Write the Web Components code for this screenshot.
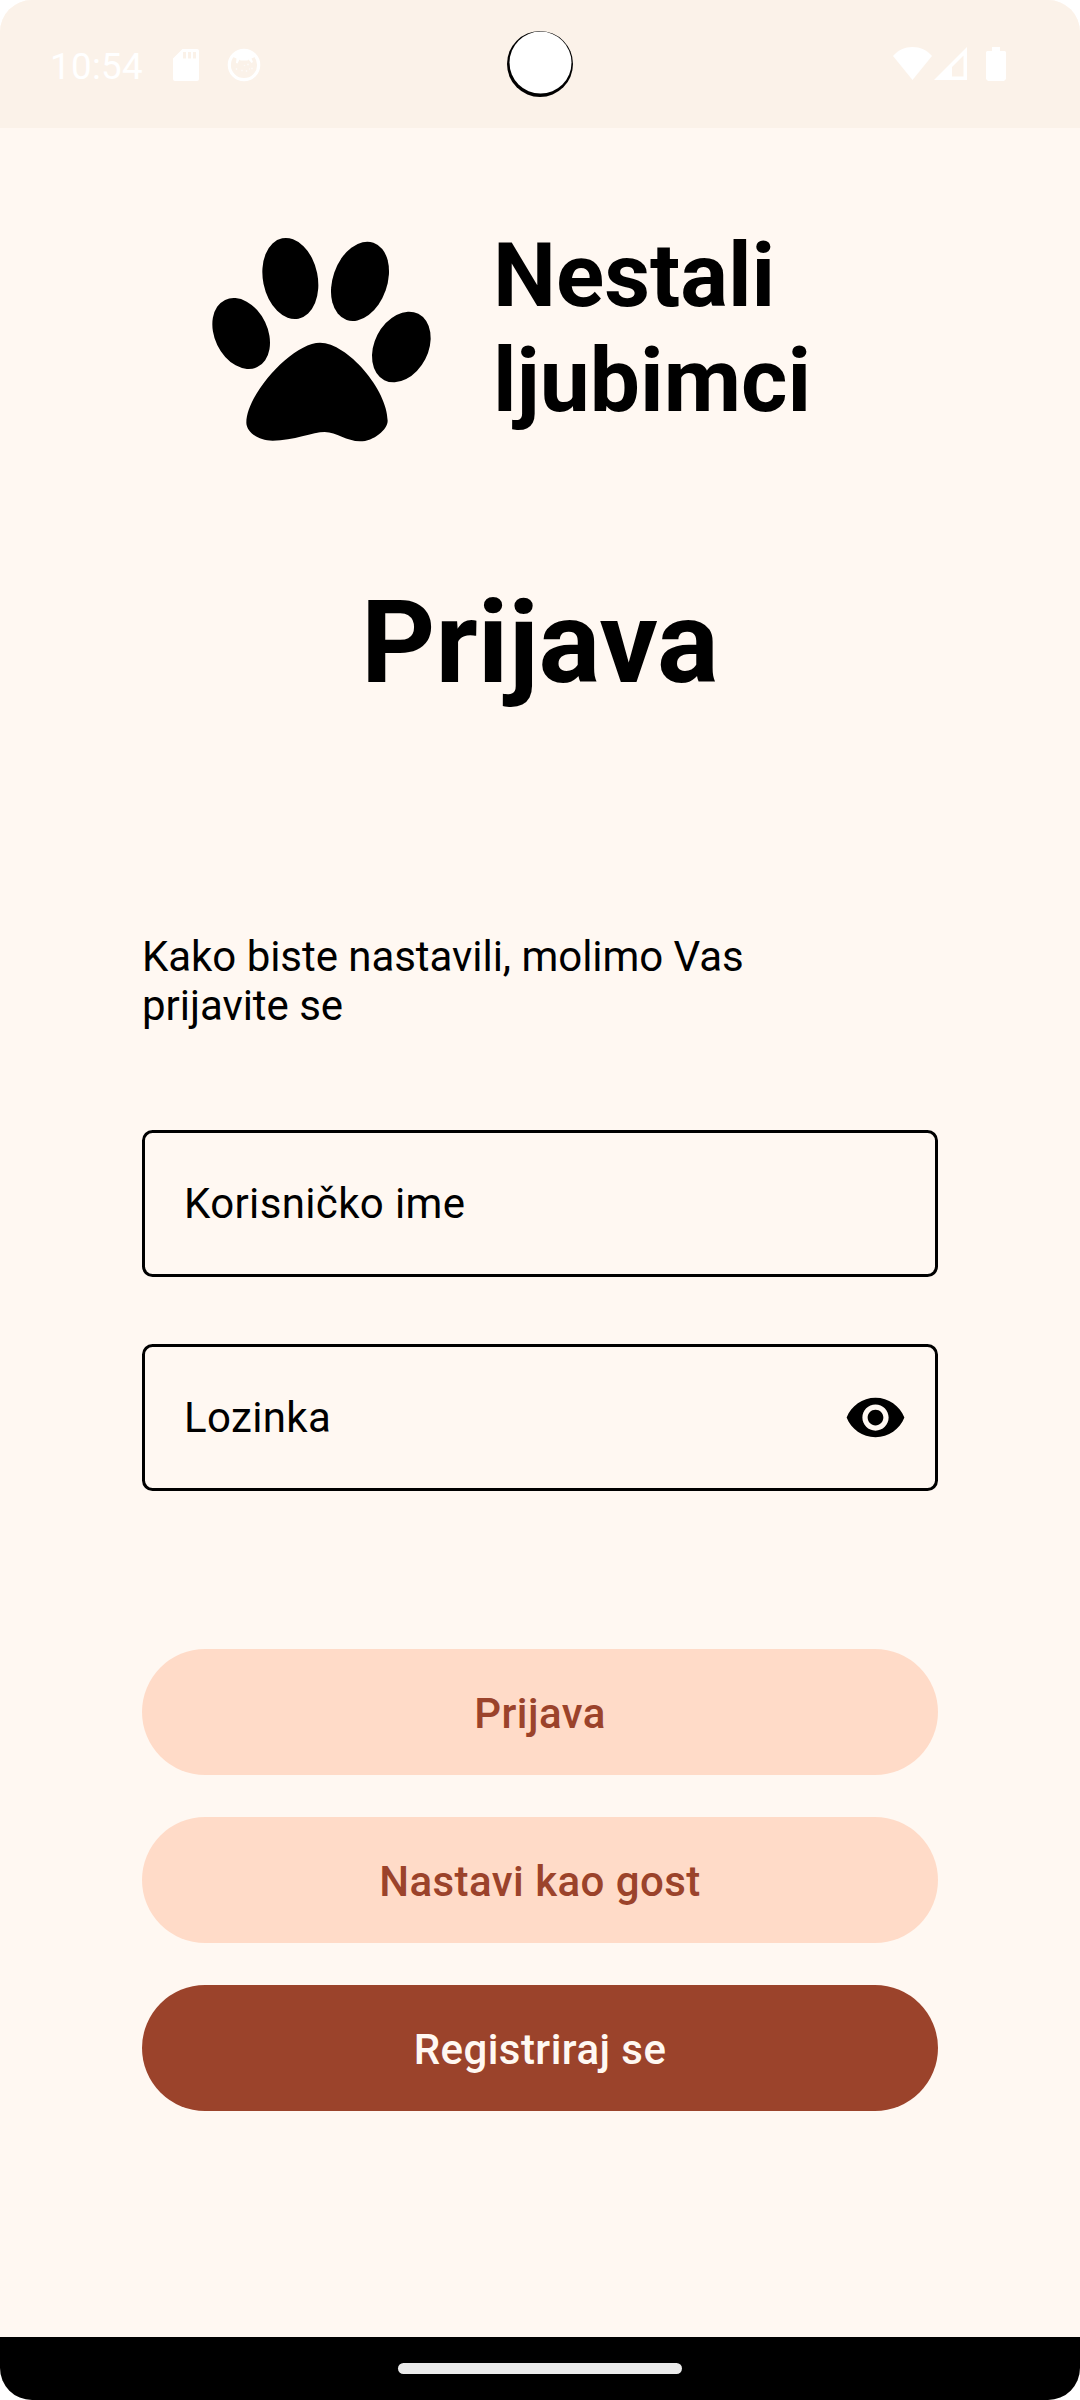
<!DOCTYPE html>
<html lang="hr">
<head>
<meta charset="utf-8">
<title>Nestali ljubimci</title>
<style>
html,body{margin:0;padding:0;background:#fff}
</style>
</head>
<body>
<pet-screen></pet-screen>
<script>
const define=(name,html)=>customElements.define(name,class extends HTMLElement{
  constructor(){super();this.attachShadow({mode:"open"}).innerHTML=html;}
});

define("status-bar",`<style>
:host{display:flex;box-sizing:border-box;height:128px;padding:0 74px 0 50px;background:#fbf2e9;color:#fff;align-items:flex-start;position:relative}
.time{font-size:36.75px;line-height:44px;letter-spacing:.3px;margin-top:45px;width:123px;white-space:nowrap}
svg{display:block;flex:none}
.sd{margin-top:49px}.face{margin:48px 0 0 28px}
.cam{position:absolute;left:506px;top:30px}
.right{margin:47px 0 0 auto;display:flex}
.cell{margin-left:2.5px}.bat{margin-left:19px}
</style>
<div class="time">10:54</div>
<svg class="sd" width="26" height="32" viewBox="0 0 26 32"><path fill="#fff" fill-rule="evenodd" d="M9.5 0H24a2 2 0 0 1 2 2V30a2 2 0 0 1-2 2H2a2 2 0 0 1-2-2V9.5ZM10 3V9.5H13V3ZM15 3V9.5H18V3ZM20 3V9.5H23V3Z"/></svg>
<svg class="face" width="34" height="34" viewBox="0 0 34 34"><circle cx="17" cy="17" r="14.7" fill="none" stroke="#fff" stroke-width="3.2"/><path fill="#fff" d="M6 9C9 1 25 1 28 9L24.500 10.500 26 14 24.500 15 21.500 11.500 20.500 12.500H13.500L12.500 11.500 10.500 15.500 9 15 9.500 10.500Z"/><g fill="#fff" opacity=".6"><circle cx="9.500" cy="21" r=".9"/><circle cx="15" cy="22.500" r=".9"/><circle cx="19.500" cy="23" r=".9"/><circle cx="21" cy="16.500" r="1"/><circle cx="17.500" cy="17.500" r=".8"/><circle cx="25" cy="20.500" r=".9"/><circle cx="22.500" cy="21" r=".7"/></g></svg>
<svg class="cam" width="68" height="68" viewBox="0 0 68 68"><circle cx="34" cy="34" r="33"/><circle cx="34.500" cy="32.600" r="31" fill="#fff"/></svg>
<div class="right">
<svg width="39" height="33" viewBox="0 0 39 33"><path fill="#fff" d="M19.500 33 0 9C5 3 12 0 19.500 0S34 3 39 9Z"/></svg>
<svg class="cell" width="33" height="33" viewBox="0 0 33 33"><path fill="#fff" fill-rule="evenodd" d="M33 0V33H0ZM29.500 8.500 18 20V29.500H29.500Z"/></svg>
<svg class="bat" width="20" height="34" viewBox="0 0 20 34"><path fill="#fff" d="M6 0H14V4H18.500A1.500 1.500 0 0 1 20 5.500V32L18 34H2L0 32V5.500A1.500 1.500 0 0 1 1.500 4H6Z"/></svg>
</div>`);

define("brand-header",`<style>
:host{display:flex;height:250px;margin:82px 0 0 190px;align-items:flex-start}
svg{display:block;flex:none}
.name{margin:13px 0 0 43px;font-weight:700;font-size:89.25px;line-height:105px}
</style>
<svg width="260" height="250" viewBox="0 0 780 750"><ellipse cx="153.500" cy="370.500" rx="79.600" ry="111.700" transform="rotate(-25.600 153.500 370.500)"/><ellipse cx="301" cy="205.500" rx="82" ry="122.900" transform="rotate(-11.500 301 205.500)"/><ellipse cx="510" cy="214" rx="81.600" ry="122.800" transform="rotate(19.200 510 214)"/><ellipse cx="634" cy="411" rx="80.600" ry="111.800" transform="rotate(27.200 634 411)"/><path d="M390 398C472 398 593 540 593 632C593 658 552 694 510 694C470 694 440 666 404 666C370 666 310 692 248 692C200 692 169 662 169 638C169 552 308 398 390 398Z"/></svg>
<div class="name"><slot></slot></div>`);

define("page-title",`<style>
:host{display:block;margin-top:115px;height:136px;text-align:center;font-weight:700;font-size:115.5px;line-height:136px}
</style><slot></slot>`);

define("form-hint",`<style>
:host{display:block;width:640px;margin-top:221px;font-size:42px;line-height:49px;letter-spacing:-.045px}
</style><slot></slot>`);

define("text-field",`<style>
:host{display:flex;box-sizing:border-box;height:147px;border:3px solid #000;border-radius:10.5px;padding:0 28px 0 39px;align-items:center;justify-content:space-between;font-size:42px;line-height:50px;letter-spacing:.36px}
</style><span><slot></slot></span><slot name="icon"></slot>`);

define("eye-icon",`<style>:host{display:block;width:63px;height:63px}svg{display:block}</style>
<svg width="63" height="63" viewBox="0 0 24 24"><path d="M12 4.500C7 4.500 2.730 7.610 1 12c1.730 4.390 6 7.500 11 7.500s9.270-3.110 11-7.500c-1.730-4.390-6-7.500-11-7.500zM12 17c-2.760 0-5-2.240-5-5s2.240-5 5-5 5 2.240 5 5-2.240 5-5 5zm0-8c-1.660 0-3 1.340-3 3s1.340 3 3 3 3-1.340 3-3-1.340-3-3-3z"/></svg>`);

define("pill-button",`<style>
:host{display:flex;box-sizing:border-box;height:126px;padding-top:4px;border-radius:63px;background:#ffdbc8;color:#9b432b;align-items:center;justify-content:center;font-weight:500;font-size:42px;line-height:50px;letter-spacing:.45px}
:host([primary]){background:#9b432b;color:#fff8f2}
</style><span><slot></slot></span>`);

define("nav-bar",`<style>
:host{display:flex;height:63px;background:#000;justify-content:center;margin-top:auto}
i{display:block;width:284px;height:11px;border-radius:5.5px;background:#ebebeb;margin-top:26px}
</style><i></i>`);

define("pet-screen",`<style>
:host{display:flex;flex-direction:column;width:1080px;height:2400px;border-radius:32px;overflow:hidden;background:#fff8f2;color:#000;font-family:Roboto,sans-serif}
.form{display:flex;flex-direction:column;margin:0 142px}
.fields{display:flex;flex-direction:column;gap:67px;margin-top:100px}
.actions{display:flex;flex-direction:column;gap:42px;margin-top:158px}
</style>
<status-bar></status-bar>
<brand-header>Nestali<br>ljubimci</brand-header>
<page-title>Prijava</page-title>
<div class="form">
<form-hint>Kako biste nastavili, molimo Vas prijavite se</form-hint>
<div class="fields"><text-field>Korisničko ime</text-field><text-field>Lozinka<eye-icon slot="icon"></eye-icon></text-field></div>
<div class="actions"><pill-button>Prijava</pill-button><pill-button>Nastavi kao gost</pill-button><pill-button primary>Registriraj se</pill-button></div>
</div>
<nav-bar></nav-bar>`);
</script>
</body>
</html>
